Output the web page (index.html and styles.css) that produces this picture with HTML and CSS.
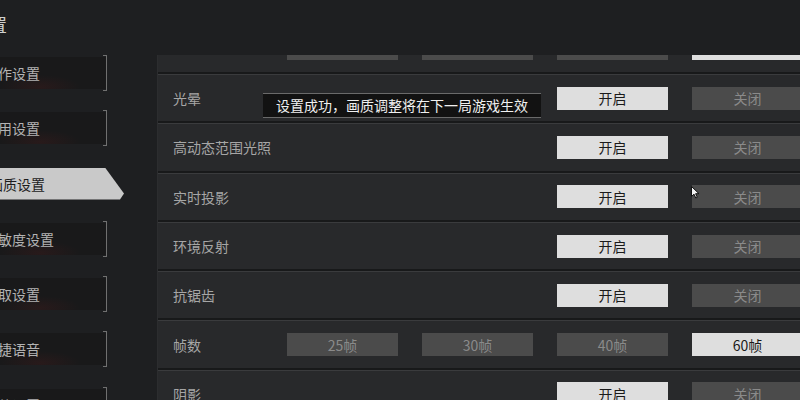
FILE: index.html
```html
<!DOCTYPE html>
<html lang="zh-CN">
<head>
  <meta charset="UTF-8">
  <meta name="viewport" content="width=device-width, initial-scale=1.0">
  <title>画质设置</title>
  <link rel="stylesheet" href="styles.css">
</head>
<body>

  <!-- Header -->
  <div class="header">
    <h1 class="title">设置</h1>
  </div>

  <div class="main">

    <!-- Side menu -->
    <ul class="menu">
      <li class="menu-item">操作设置</li>
      <li class="menu-item">通用设置</li>
      <li class="menu-item active">画质设置</li>
      <li class="menu-item">灵敏度设置</li>
      <li class="menu-item">拾取设置</li>
      <li class="menu-item">快捷语音</li>
      <li class="menu-item">其他设置</li>
    </ul>

    <!-- Graphics options -->
    <div class="panel">
      <div class="rows">
        <!-- row scrolled above the view, only the option bars show -->
        <div class="row">
          <span class="label"></span>
          <button class="opt"></button>
          <button class="opt"></button>
          <button class="opt"></button>
          <button class="opt on"></button>
        </div>
        <div class="row">
          <span class="label">光晕</span>
          <button class="opt on last-two">开启</button>
          <button class="opt">关闭</button>
        </div>
        <div class="row">
          <span class="label">高动态范围光照</span>
          <button class="opt on last-two">开启</button>
          <button class="opt">关闭</button>
        </div>
        <div class="row">
          <span class="label">实时投影</span>
          <button class="opt on last-two">开启</button>
          <button class="opt">关闭</button>
        </div>
        <div class="row">
          <span class="label">环境反射</span>
          <button class="opt on last-two">开启</button>
          <button class="opt">关闭</button>
        </div>
        <div class="row">
          <span class="label">抗锯齿</span>
          <button class="opt on last-two">开启</button>
          <button class="opt">关闭</button>
        </div>
        <div class="row">
          <span class="label">帧数</span>
          <button class="opt">25帧</button>
          <button class="opt">30帧</button>
          <button class="opt">40帧</button>
          <button class="opt on">60帧</button>
        </div>
        <div class="row">
          <span class="label">阴影</span>
          <button class="opt on last-two">开启</button>
          <button class="opt">关闭</button>
        </div>
      </div>

      <!-- Toast message -->
      <div class="toast">设置成功，画质调整将在下一局游戏生效</div>

      <!-- Mouse pointer -->
      <svg class="cursor" width="9" height="13" viewBox="0 0 9 13">
        <path d="M0.5 0.5 L0.5 10.5 L3 8.2 L4.8 12 L6.3 11.3 L4.6 7.7 L8 7.7 Z" fill="#f2f2f2" stroke="#111" stroke-width="1"/>
      </svg>
    </div>

  </div>

</body>
</html>
```

FILE: styles.css
```css
body {
  margin: 0;
  width: 800px;
  height: 400px;
  overflow: hidden;
  background-color: #1e1f21;
  font-family: "Noto Sans CJK SC", "Noto Sans", sans-serif;
  color: #a8a8a8;
}
.header {
  height: 55px;
  box-sizing: border-box;
  padding-top: 14px;
}
.title {
  margin: 0 0 0 -29px;
  font-size: 18px;
  line-height: 20px;
  font-weight: normal;
  color: #cfcfcf;
}
.main {
  display: flex;
  height: 345px;
}

/* side menu */
.menu {
  flex-shrink: 0;
  width: 187px;
  margin: 0 0 0 -30px;
  padding: 2px 0 0;
  list-style: none;
  overflow: hidden;
}
.menu-item {
  position: relative;
  width: 137px;
  height: 32px;
  box-sizing: border-box;
  margin-bottom: 23.3px;
  padding-left: 14px;
  line-height: 32px;
  font-size: 14px;
  color: #b3b3b3;
  background: radial-gradient(ellipse 40px 12px at 70px 30px, rgba(110, 30, 30, 0.18), transparent), #19191a;
}
.menu-item::after {
  content: "";
  position: absolute;
  top: -2px;
  bottom: -2px;
  right: 0;
  width: 3px;
  border: 1px solid #707070;
  border-left: 0;
}
.menu-item.active {
  width: 154px;
  padding-left: 19px;
  color: #1c1c1c;
  background: #c9c9c9;
  clip-path: polygon(0 0, 135px 0, 154px 81%, 150px 100%, 0 100%);
}
.menu-item.active::after {
  display: none;
}

/* options panel */
.panel {
  position: relative;
  flex: 1;
  overflow: hidden;
  background-color: #222325;
  border-left: 1px solid #2c2d2f;
}
.rows {
  margin-top: -30.3px;
}
.row {
  display: grid;
  grid-template-columns: 90px repeat(4, 111px);
  column-gap: 24px;
  align-items: center;
  height: 49.3px;
  box-sizing: border-box;
  padding-left: 15px;
  background-color: #28292b;
  border-top: 1px solid #3a3b3d;
  border-bottom: 2px solid #18191a;
}
.label {
  font-size: 14px;
  white-space: nowrap;
  color: #a6a6a6;
}
.opt {
  height: 23px;
  padding: 0;
  border: none;
  font-family: inherit;
  font-size: 14px;
  color: #8a8a8a;
  background-color: #4b4b4b;
}
.opt.on {
  color: #1a1a1a;
  background-color: #dedede;
}
.opt.last-two {
  grid-column-start: 4;
}

.toast {
  position: absolute;
  left: 105px;
  top: 38px;
  width: 278px;
  height: 25px;
  box-sizing: border-box;
  border-top: 1px solid #6a6a6a;
  border-bottom: 1px solid #6a6a6a;
  background-color: #121212;
  color: #f0f0f0;
  font-size: 14px;
  line-height: 23px;
  text-align: center;
}
.cursor {
  position: absolute;
  left: 533px;
  top: 131px;
}
```
